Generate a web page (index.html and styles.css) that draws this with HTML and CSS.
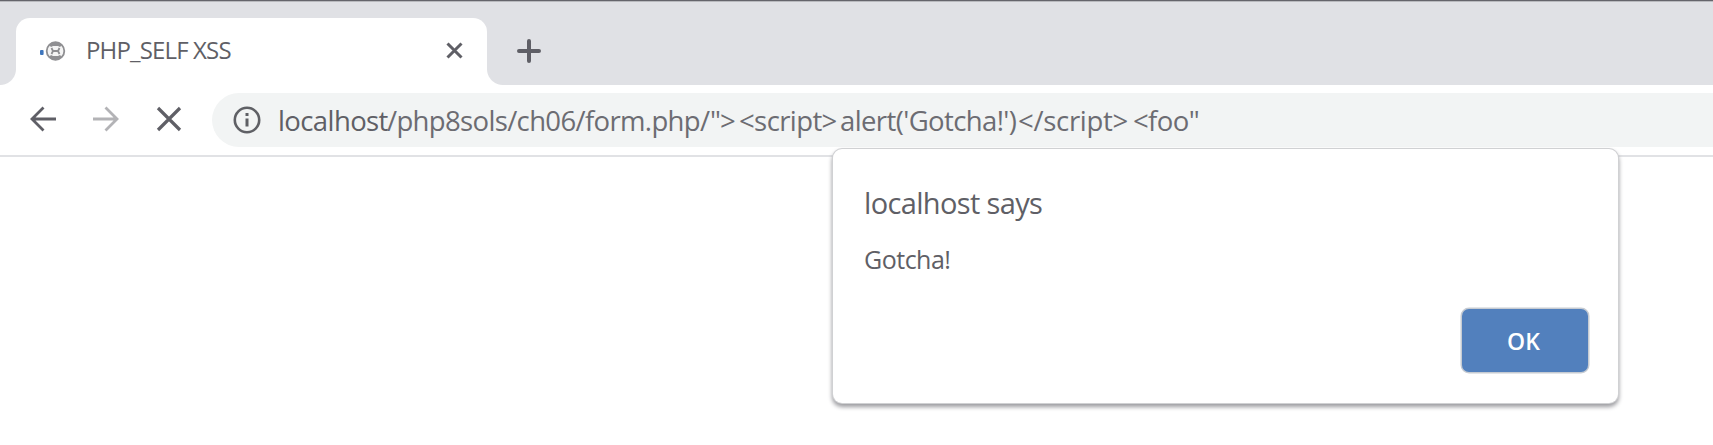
FILE: index.html
```html
<!DOCTYPE html>
<html lang="en">
<head>
<meta charset="utf-8">
<title>PHP_SELF XSS</title>
<link rel="stylesheet" href="styles.css">
</head>
<body>
<div class="browser">
  <div class="tabstrip">
    <div class="tab-edge"></div>
    <div class="tab">
      <svg class="favicon" width="28" height="22" viewBox="0 0 28 22"><rect x="1" y="10" width="3.600" height="5" rx="1" fill="#3f76bd"/><circle cx="16.500" cy="11" r="8.800" fill="#f4f4f4" stroke="#8f8f92" stroke-width="1.800"/><path d="M10 5l4-3h5l4 3-2 2-2-1h-5l-2 1zM10 17l4 3h5l4-3-2-2-2 1h-5l-2-1z" fill="#8f8f92"/><path d="M12.500 8l1.500 3-1.500 3M20.500 8L19 11l1.500 3M14 11h5" fill="none" stroke="#8f8f92" stroke-width="1.800"/></svg>
      <span class="tab-title">PHP_SELF XSS</span>
      <svg class="tab-close" width="18" height="18" viewBox="0 0 18 18"><path d="M1.500 1.500l14 14M15.500 1.500l-14 14"/></svg>
    </div>
    <div class="strip-rest">
      <svg class="plus" width="26" height="26" viewBox="0 0 26 26"><path d="M13 3v20M3 13h20"/></svg>
    </div>
  </div>
  <div class="toolbar">
    <svg class="nav back" width="28" height="28" viewBox="0 0 28 28"><path d="M27 14H3M14.500 2.500L3 14l11.500 11.500"/></svg>
    <svg class="nav forward" width="28" height="28" viewBox="0 0 28 28"><path d="M1 14h24M13.500 2.500L25 14 13.500 25.500"/></svg>
    <svg class="nav stop" width="26" height="26" viewBox="0 0 26 26"><path d="M2 2l22 22M24 2L2 24"/></svg>
    <div class="omnibox">
      <svg class="info" width="28" height="28" viewBox="0 0 28 28"><circle cx="14" cy="14" r="12.200" fill="none" stroke="#5f6065" stroke-width="2.600"/><path d="M14 12.500v8M14 7v3" stroke="#5f6065" stroke-width="3"/></svg>
      <div class="url"><span class="host">localhost</span><span class="path">/php8sols/ch06/form.php/</span><span class="quote">"</span><span class="gt">&gt;</span><span class="open">&lt;script&gt;</span><span class="call">alert('Gotcha!')</span><span class="close">&lt;/script&gt;</span><span class="foo">&lt;foo"</span></div>
    </div>
  </div>
  <div class="dialog">
    <div class="dialog-title">localhost says</div>
    <div class="dialog-message">Gotcha!</div>
    <button class="ok">OK</button>
  </div>
</div>
</body>
</html>
```
FILE: styles.css
```css
* { box-sizing: border-box; }
body { margin: 0; background: #fff; color: #5f5f66; font-family: "Open Sans", "Noto Sans", sans-serif; }
.browser { position: relative; height: 445px; overflow: hidden; }
.tabstrip { display: flex; height: 85px; padding-top: 18px; background: linear-gradient(#65656b 0 1px, #b9babe 1px 2px, #e0e1e5 2px); }
.tab-edge { width: 16px; background: radial-gradient(circle at 0 51px, #e0e1e5 15.5px, #fff 16.5px); clip-path: inset(51px 0 0 0); }
.tab { width: 471px; display: flex; align-items: center; padding: 0 23px 1px; background: #fff; border-radius: 14px 14px 0 0; }
.favicon { flex: none; }
.tab-title { margin: -2px 0 0 19px; font-size: 24px; line-height: 32px; letter-spacing: -0.85px; white-space: nowrap; }
.tab-close { margin-left: auto; fill: none; stroke: #5f5f66; stroke-width: 3; }
.strip-rest { flex: 1; display: flex; align-items: center; padding: 0 0 1px 29px; background: radial-gradient(circle at 16px 0, #e0e1e5 15.5px, #fff 16.5px) 0 51px / 16px 16px no-repeat; }
.plus { fill: none; stroke: #5f5f66; stroke-width: 4; stroke-linecap: round; }
.toolbar { height: 72px; display: flex; padding: 8px 0 0 29px; border-bottom: 2px solid #e1e2e5; background: #fff; }
.nav { flex: none; fill: none; stroke: #5f5f66; stroke-width: 2.8; margin-top: 12px; }
.forward { margin-left: 35px; stroke: #b3b3b6; }
.stop { margin: 13px 0 0 36px; stroke-width: 3.2; }
.omnibox { flex: 1; height: 54px; margin-left: 30px; padding-left: 21px; display: flex; align-items: center; background: #f2f4f4; border-radius: 27px 0 0 27px; }
.info { flex: none; }
.url { display: flex; margin: 1px 0 0 17px; font-size: 27.5px; line-height: 38px; white-space: nowrap; color: #6c6c72; letter-spacing: -0.6px; }
.url span { display: block; flex: none; }
.host { width: 109px; color: #5f5f66; }
.path { width: 323px; letter-spacing: -0.65px; }
.quote { width: 10px; }
.gt { width: 19px; }
.open { width: 101px; }
.call { width: 178px; }
.close { width: 115px; letter-spacing: -0.3px; }
.dialog { position: absolute; left: 833px; top: 149px; width: 785px; height: 254px; padding: 34px 30px; display: flex; flex-direction: column; background: #fff; border-radius: 9px; box-shadow: 0 0 0 1px #d0d1d3, 0 3px 4px 1px #9c9ca0; }
.dialog-title { padding-left: 1px; font-size: 29px; line-height: 40px; letter-spacing: -0.65px; }
.dialog-message { padding-left: 1px; margin-top: 19px; font-size: 25px; line-height: 34px; letter-spacing: -0.5px; }
.ok { flex: none; align-self: flex-end; width: 126px; height: 63px; margin-top: 33px; padding: 0 3px 0 0; border: 0; border-radius: 7px; background: #5280bd; color: #fff; font: 600 23px "Open Sans", sans-serif; box-shadow: 0 0 0 1.5px #c6cbd2; }
```
